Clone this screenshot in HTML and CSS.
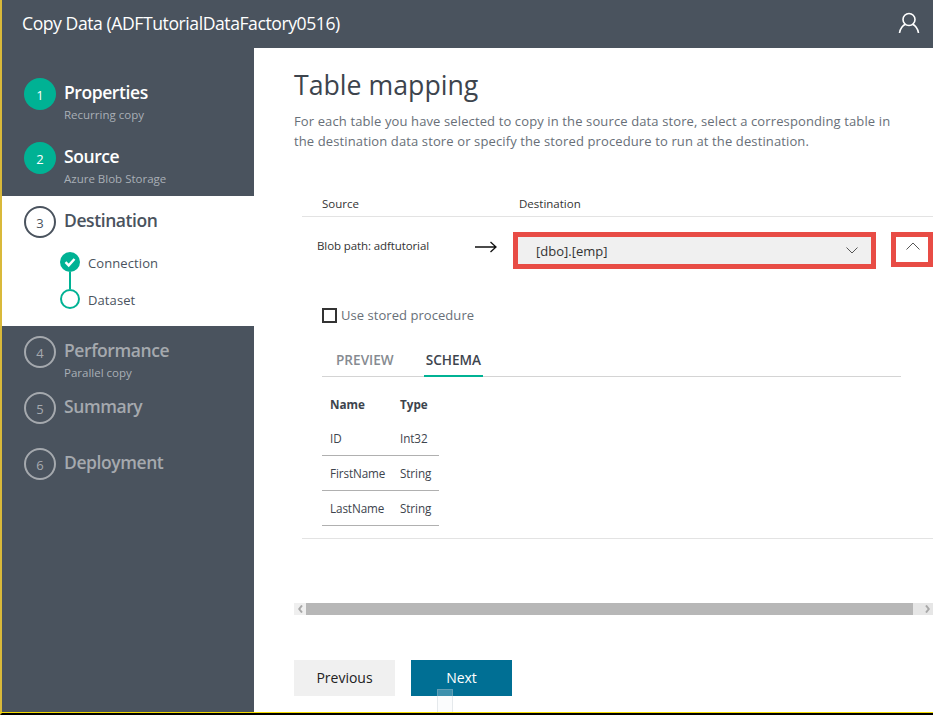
FILE: index.html
```html
<!DOCTYPE html>
<html lang="en">
<head>
<meta charset="utf-8">
<title>Copy Data</title>
<link rel="stylesheet" href="styles.css">
</head>
<body>
<div class="window">
  <header class="topbar">
    <span class="app-title">Copy Data (ADFTutorialDataFactory0516)</span>
    <svg class="user-icon" width="22" height="22" viewBox="0 0 22 22" fill="none" stroke="#fff" stroke-width="1.6"><circle cx="11" cy="7.5" r="6"/><path d="M1.500 21c.6-4.600 3.600-8 6-8.600M20.500 21c-.6-4.600-3.600-8-6-8.600"/></svg>
  </header>
  <div class="body">
    <nav class="sidebar">
      <div class="step done">
        <div class="num">1</div>
        <div class="step-text"><div class="step-name">Properties</div><div class="step-sub">Recurring copy</div></div>
      </div>
      <div class="step done">
        <div class="num">2</div>
        <div class="step-text"><div class="step-name">Source</div><div class="step-sub">Azure Blob Storage</div></div>
      </div>
      <div class="step current">
        <div class="step-head">
          <div class="num">3</div>
          <div class="step-text"><div class="step-name">Destination</div></div>
        </div>
        <div class="substeps">
          <div class="substep">
            <svg class="sub-icon" width="20" height="20" viewBox="0 0 20 20"><circle cx="10" cy="10" r="10" fill="#00b294"/><path d="M5.500 10.200l3.200 3.200 5.800-6.400" fill="none" stroke="#fff" stroke-width="2.400"/></svg>
            <span>Connection</span>
          </div>
          <div class="connector"></div>
          <div class="substep">
            <svg class="sub-icon" width="20" height="20" viewBox="0 0 20 20"><circle cx="10" cy="10" r="9" fill="none" stroke="#00b294" stroke-width="2"/></svg>
            <span>Dataset</span>
          </div>
        </div>
      </div>
      <div class="step todo short">
        <div class="num">4</div>
        <div class="step-text"><div class="step-name">Performance</div><div class="step-sub">Parallel copy</div></div>
      </div>
      <div class="step todo short">
        <div class="num">5</div>
        <div class="step-text"><div class="step-name">Summary</div></div>
      </div>
      <div class="step todo short">
        <div class="num">6</div>
        <div class="step-text"><div class="step-name">Deployment</div></div>
      </div>
    </nav>
    <main class="main">
      <h1 class="page-title">Table mapping</h1>
      <p class="intro">For each table you have selected to copy in the source data store, select a corresponding table in the destination data store or specify the stored procedure to run at the destination.</p>
      <section class="mapping">
        <div class="map-head">
          <span class="col-source">Source</span>
          <span class="col-dest">Destination</span>
        </div>
        <div class="map-row">
          <span class="blob">Blob path: adftutorial</span>
          <svg class="arrow" width="22" height="12" viewBox="0 0 22 12" fill="none" stroke="#111" stroke-width="1.300"><path d="M0 6h21M15.500 1l5.500 5-5.500 5"/></svg>
          <div class="select">
            <span>[dbo].[emp]</span>
            <svg width="12" height="7" viewBox="0 0 12 7" fill="none" stroke="#555" stroke-width="1"><path d="M.5.5L6 6l5.500-5.500"/></svg>
          </div>
          <div class="collapse">
            <svg width="14" height="8" viewBox="0 0 14 8" fill="none" stroke="#555" stroke-width="1"><path d="M.5 7.500L7 1l6.500 6.500"/></svg>
          </div>
        </div>
        <label class="stored"><span class="checkbox"></span>Use stored procedure</label>
        <div class="tabs">
          <span class="tab">PREVIEW</span>
          <span class="tab active">SCHEMA</span>
        </div>
        <table class="schema">
          <thead><tr><th class="col-name">Name</th><th>Type</th></tr></thead>
          <tbody>
            <tr><td>ID</td><td>Int32</td></tr>
            <tr><td>FirstName</td><td>String</td></tr>
            <tr><td>LastName</td><td>String</td></tr>
          </tbody>
        </table>
      </section>
      <div class="scrollbar">
        <div class="sb-btn"><svg width="5" height="8" viewBox="0 0 5 8" fill="none" stroke="#a8a8a8" stroke-width="2"><path d="M4 .5L1.200 4 4 7.500"/></svg></div>
        <div class="sb-thumb"></div>
        <div class="sb-btn"><svg width="5" height="8" viewBox="0 0 5 8" fill="none" stroke="#a8a8a8" stroke-width="2"><path d="M1 .5L3.800 4 1 7.500"/></svg></div>
      </div>
      <div class="actions">
        <button class="btn">Previous</button>
        <button class="btn primary">Next</button>
      </div>
      <div class="ghost"></div>
    </main>
  </div>
</div>
</body>
</html>
```
FILE: styles.css
```css
* { box-sizing: border-box; }
html, body { margin: 0; padding: 0; }
body {
  width: 933px;
  height: 715px;
  overflow: hidden;
  font-family: "Open Sans", "Noto Sans", sans-serif;
  background: #000;
}
.window {
  width: 933px;
  height: 715px;
  display: flex;
  flex-direction: column;
  border-left: 2px solid #d9b93a;
  border-bottom: 2px solid #000;
  background: #fff;
  position: relative;
}
.window::after {
  content: "";
  position: absolute;
  left: -2px;
  right: 0;
  bottom: 0;
  height: 1px;
  background: #f5dc00;
}
.topbar {
  height: 48px;
  flex: none;
  background: #4a535e;
  display: flex;
  align-items: center;
  justify-content: space-between;
  padding: 0 13px 0 20px;
}
.app-title { color: #fff; font-size: 17.6px; letter-spacing: -0.44px; padding-bottom: 2px; }
.user-icon { margin-bottom: 3px; }
.body { flex: 1; display: flex; min-height: 0; }
.sidebar {
  width: 252px;
  flex: none;
  background: #4a535e;
  padding-top: 20px;
}
.step { display: flex; gap: 8px; height: 64px; padding: 10px 0 0 22px; }
.step.short { height: 56px; }
.num {
  width: 32px;
  height: 32px;
  flex: none;
  border-radius: 50%;
  display: flex;
  align-items: center;
  justify-content: center;
  font-size: 13px;
  padding-top: 2px;
}
.step-name { font-size: 17.5px; font-weight: 600; line-height: 24px; letter-spacing: -0.42px; margin-top: 2px; }
.step-sub { font-size: 11.5px; line-height: 16px; color: #a9afb6; letter-spacing: 0; margin-top: 3px; }
.done .num { background: #00b294; color: #fff; }
.done .step-name { color: #fff; }
.step.current { display: block; height: 130px; background: #fff; }
.step-head { display: flex; gap: 8px; }
.current .num { border: 2px solid #4a535e; color: #4a535e; }
.current .step-name { color: #4a535e; }
.substeps { padding: 14px 0 0 36px; }
.substep { display: flex; align-items: center; gap: 8px; height: 20px; font-size: 13px; color: #4a535e; letter-spacing: 0.1px; }
.substep span { padding-top: 2px; }
.sub-icon { flex: none; }
.connector { width: 2px; height: 17px; margin-left: 9px; background: #00b294; }
.todo .num { border: 2px solid #a5a9ae; color: #a5a9ae; }
.todo .step-name { color: #a5a9ae; }
.main { flex: 1; min-width: 0; padding: 19px 0 0 40px; position: relative; }
.page-title { margin: 0; font-size: 26.7px; font-weight: 400; line-height: 36px; color: #3d444d; letter-spacing: 0; }
.intro {
  margin: 8px 0 0;
  width: 603px;
  font-size: 13px;
  line-height: 20px;
  color: #686f78;
  letter-spacing: 0.12px;
}
.mapping { margin: 42px 0 0 8px; }
.map-head {
  display: flex;
  height: 24px;
  border-bottom: 1px solid #e3e3e3;
  font-size: 11.5px;
  line-height: 22px;
  color: #333;
}
.col-source { padding-left: 20px; width: 217px; }
.map-row { display: flex; align-items: flex-start; height: 73px; padding-top: 15px; }
.blob { width: 173px; padding: 6px 0 0 15px; font-size: 11.5px; line-height: 16px; color: #333; letter-spacing: -0.1px; }
.arrow { flex: none; margin: 9px 0 0; }
.select {
  width: 363px;
  height: 37px;
  margin-left: 16px;
  border: 5px solid #e84c45;
  background: #f0f0f0;
  display: flex;
  align-items: center;
  justify-content: space-between;
  padding: 0 13px 0 18px;
  font-size: 13px;
  color: #333;
}
.collapse {
  width: 42px;
  height: 35px;
  margin-left: 15px;
  border: 5px solid #e84c45;
  display: flex;
  align-items: center;
  justify-content: center;
  padding: 0 0 7px 2px;
}
.stored { display: flex; align-items: center; margin: 15px 0 0 20px; font-size: 13px; color: #686f78; height: 20px; letter-spacing: 0.05px; }
.checkbox { width: 15px; height: 15px; border: 2px solid #333; margin-right: 4px; flex: none; }
.tabs { margin: 22px 32px 0 20px; padding-left: 12px; display: flex; height: 30px; border-bottom: 1px solid #d4d4d4; font-size: 13.6px; font-weight: 600; line-height: 26px; }
.tab { color: #868b91; padding: 0 2px; margin-right: 28px; }
.tab.active { color: #3d444d; height: 30px; border-bottom: 2px solid #00b294; }
.schema {
  margin: 8px 0 0 20px;
  border-collapse: collapse;
  table-layout: fixed;
  font-size: 11.7px;
  color: #3d444d;
  width: 117px;
}
.col-name { width: 70px; }
.schema th { text-align: left; font-weight: 700; height: 35px; padding: 3px 0 0 8px; }
.schema td { height: 35px; padding: 1px 0 0 8px; border-bottom: 1px solid #b0b0b0; letter-spacing: -0.1px; white-space: nowrap; }
.mapping::after { content: ""; display: block; height: 1px; background: #e3e3e3; margin-top: 12px; }
.scrollbar { display: flex; height: 12px; margin: 64px 0 0; }
.sb-btn { width: 12px; flex: none; background: #efefef; display: flex; align-items: center; justify-content: center; }
.sb-thumb { flex: 1; background: #b7b7b7; }
.scrollbar .sb-btn:last-child { width: 20px; background: #e6e6e6; padding-left: 8px; }
.actions { display: flex; gap: 16px; margin-top: 45px; }
.btn {
  width: 101px;
  height: 36px;
  border: 0;
  background: #f0f0f0;
  color: #222;
  font-family: inherit;
  font-size: 14px;
  padding: 0;
}
.btn.primary { background: #006f94; color: #fff; }
.ghost {
  position: absolute;
  left: 183px;
  bottom: 0;
  width: 16px;
  height: 24px;
  background: rgba(240, 244, 248, 0.25);
  border: 1px solid rgba(180,190,200,0.3);
  border-bottom: 0;
}
```
